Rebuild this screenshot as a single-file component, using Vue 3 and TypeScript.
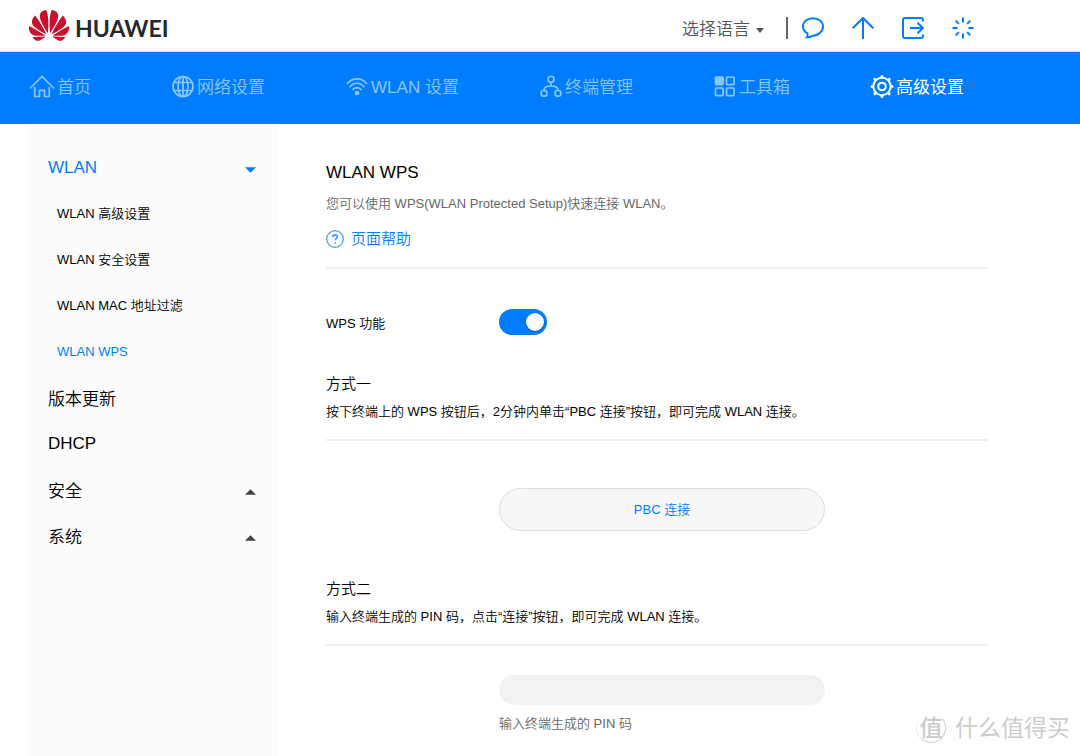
<script setup lang="ts">
import { ref } from 'vue'

type IconName = 'home' | 'globe' | 'wifi' | 'nodes' | 'tools' | 'gear'

interface NavItem {
  label: string
  icon: IconName
  active?: boolean
}

const navItems: NavItem[] = [
  { label: '首页', icon: 'home' },
  { label: '网络设置', icon: 'globe' },
  { label: 'WLAN 设置', icon: 'wifi' },
  { label: '终端管理', icon: 'nodes' },
  { label: '工具箱', icon: 'tools' },
  { label: '高级设置', icon: 'gear', active: true },
]

const wlanItems: string[] = ['WLAN 高级设置', 'WLAN 安全设置', 'WLAN MAC 地址过滤', 'WLAN WPS']
const currentPage = ref('WLAN WPS')
const plainItems: string[] = ['版本更新', 'DHCP']
const closedGroups: string[] = ['安全', '系统']

const wpsEnabled = ref(true)
const pin = ref('')
</script>

<template>
  <div class="page">
    <header class="topbar">
      <a class="brand" href="#" aria-label="HUAWEI">
        <svg class="brand-mark" viewBox="0 2.9 24 18.2" preserveAspectRatio="none" aria-hidden="true">
          <path d="M3.67 6.14S1.82 7.91 1.72 9.78v.35c.08 1.51 1.22 2.4 1.22 2.4 1.83 1.79 6.26 4.04 7.3 4.55 0 0 .06.03.1-.01l.02-.04v-.04C7.52 10.8 3.67 6.14 3.67 6.14zM9.65 18.6c-.02-.08-.1-.08-.1-.08l-7.38.26c.8 1.43 2.15 2.53 3.56 2.2.96-.25 3.16-1.78 3.88-2.3.06-.05.04-.09.04-.09zm.08-.78C6.49 15.63.21 12.28.21 12.28c-.15.46-.2.9-.21 1.3v.07c0 1.07.4 1.82.4 1.82.8 1.69 2.34 2.2 2.34 2.2.7.3 1.4.31 1.4.31.12.02 4.4 0 5.54 0 .05 0 .08-.05.08-.05v-.06c0-.03-.03-.05-.03-.05zM9.06 3.19a3.42 3.42 0 00-2.57 3.15v.41c.03.6.16 1.05.16 1.05.66 2.9 3.86 7.65 4.55 8.65.05.05.1.03.1.03a.1.1 0 00.06-.1c1.06-10.6-1.11-13.42-1.11-13.42-.32.02-1.19.23-1.19.23zm8.3 2.27s-.49-1.8-2.44-2.28c0 0-.57-.14-1.17-.22 0 0-2.18 2.81-1.12 13.43.01.07.06.08.06.08.07.03.1-.03.1-.03.72-1.03 3.9-5.76 4.55-8.64 0 0 .36-1.4.02-2.34zm-2.92 13.07s-.07 0-.09.05c0 0-.01.07.03.1.7.51 2.85 2 3.88 2.3 0 0 .16.05.43.06h.14c.69-.02 1.9-.37 3-2.26l-7.4-.25zm7.83-8.41c.14-2.06-1.94-3.97-1.94-3.98 0 0-3.85 4.66-6.67 10.8 0 0-.03.08.02.13l.04.01h.06c1.06-.53 5.46-2.77 7.28-4.54 0 0 1.15-.93 1.21-2.42zm1.52 2.14s-6.28 3.37-9.52 5.55c0 0-.05.04-.03.11 0 0 .03.06.07.06 1.16 0 5.56 0 5.67-.02 0 0 .57-.02 1.27-.29 0 0 1.56-.5 2.37-2.27 0 0 .73-1.45.17-3.14z" />
        </svg>
        <span class="brand-name">HUAWEI</span>
      </a>

      <div class="tools">
        <div class="language">
          <select class="language-select" aria-label="选择语言">
            <option>选择语言</option>
          </select>
          <svg class="language-caret" viewBox="0 0 8 5" aria-hidden="true"><path d="M0 0h8L4 5z" /></svg>
        </div>
        <span class="tools-divider"></span>
        <button class="tool" type="button" aria-label="消息">
          <svg viewBox="0 0 22 22" aria-hidden="true">
            <path d="M5.3 16.2C2.7 14.7 1 12.3 1 9.4 1 4.8 5.5 1.2 11 1.2s10 3.6 10 8.2-4.5 9.4-10.5 9.4c-1.600 1-3.600 1.600-5.700 1.500 1-1.200 1.300-2.700.5-4.100z" />
          </svg>
        </button>
        <button class="tool" type="button" aria-label="升级">
          <svg viewBox="0 0 22 22" aria-hidden="true"><path d="M11 22V1.5M.7 11.3L11 1l10.300 10.300" /></svg>
        </button>
        <button class="tool" type="button" aria-label="退出">
          <svg viewBox="0 0 22 22" aria-hidden="true">
            <path d="M21 4.500V3a2 2 0 0 0-2-2H3a2 2 0 0 0-2 2v16a2 2 0 0 0 2 2h16a2 2 0 0 0 2-2v-1.500M8 11h12.500M15.500 5.700l5.300 5.300-5.300 5.300" />
          </svg>
        </button>
        <button class="tool" type="button" aria-label="重启">
          <svg viewBox="0 0 22 22" aria-hidden="true">
            <path d="M11 .5v5M11 16.500v5M.5 11h5M16.500 11h5M3.600 3.600l3.300 3.300M15.100 15.100l3.300 3.300M18.400 3.600l-3.300 3.300M6.900 15.100l-3.300 3.300" />
          </svg>
        </button>
      </div>
    </header>

    <nav class="nav">
      <a v-for="item in navItems" :key="item.label" href="#" class="nav-link" :class="{ active: item.active }">
        <svg v-if="item.icon === 'home'" class="nav-icon wide" viewBox="0 0 26 24" aria-hidden="true">
          <path d="M1 13.500L13 1.500l12 12M5.700 12v9.500h4.800v-6.200h5v6.200h4.800V12" />
        </svg>
        <svg v-else-if="item.icon === 'globe'" class="nav-icon" viewBox="0 0 24 24" aria-hidden="true">
          <circle cx="12" cy="11.500" r="10" />
          <ellipse cx="12" cy="11.500" rx="5" ry="10" />
          <path d="M12 1.500v20M3 7.500h18M3 15.500h18" />
        </svg>
        <svg v-else-if="item.icon === 'wifi'" class="nav-icon" viewBox="0 0 24 24" aria-hidden="true">
          <path d="M2 9a12.200 12.200 0 0 1 20 0M4.600 12.200a8.900 8.900 0 0 1 14.800 0M7.600 15a5.200 5.200 0 0 1 8.800 0" />
          <circle class="solid" cx="12" cy="18" r="1.500" />
        </svg>
        <svg v-else-if="item.icon === 'nodes'" class="nav-icon" viewBox="0 0 24 24" aria-hidden="true">
          <rect x="9.200" y="1.500" width="5.600" height="5.600" rx="2" />
          <rect x="2.200" y="15.500" width="5.600" height="5.600" rx="2" />
          <rect x="16.200" y="15.500" width="5.600" height="5.600" rx="2" />
          <path d="M12 7.100v3.900M5 15.500c0-3.300 2-4.500 7-4.500s7 1.200 7 4.500" />
        </svg>
        <svg v-else-if="item.icon === 'tools'" class="nav-icon" viewBox="0 0 24 24" aria-hidden="true">
          <rect class="solid" x="2.500" y="2" width="7.600" height="7.600" rx="1" />
          <rect x="13.500" y="2" width="7.600" height="7.600" rx="1" />
          <rect x="2.500" y="13" width="7.600" height="7.600" rx="1" />
          <rect x="13.500" y="13" width="7.600" height="7.600" rx="1" />
        </svg>
        <svg v-else class="nav-icon" viewBox="0 0 24 24" aria-hidden="true">
          <circle class="bold" cx="12" cy="11.500" r="8.700" />
          <circle class="bold" cx="12" cy="11.500" r="3.800" />
          <path class="teeth" d="M12 1.500v.5M12 21v.5M2 11.500h.5M21.500 11.500h.5M4.900 4.400l.4.400M18.700 18.200l.4.400M19.100 4.400l-.4.400M5.300 18.200l-.4.400" />
        </svg>
        <span class="nav-label">{{ item.label }}</span>
      </a>
    </nav>

    <div class="body">
      <aside class="sidebar">
        <button class="group open" type="button" aria-expanded="true">
          <span>WLAN</span>
          <svg class="caret" viewBox="0 0 12 6" aria-hidden="true"><path d="M0 0h12L6 6z" /></svg>
        </button>
        <ul class="submenu">
          <li v-for="label in wlanItems" :key="label">
            <a
              href="#"
              class="sub-link"
              :class="{ current: label === currentPage }"
              @click.prevent="currentPage = label"
            >{{ label }}</a>
          </li>
        </ul>
        <ul class="plain">
          <li v-for="label in plainItems" :key="label"><a href="#" class="plain-link">{{ label }}</a></li>
        </ul>
        <button v-for="label in closedGroups" :key="label" class="group" type="button" aria-expanded="false">
          <span>{{ label }}</span>
          <svg class="caret" viewBox="0 0 12 6" aria-hidden="true"><path d="M0 6h12L6 0z" /></svg>
        </button>
      </aside>

      <main class="content">
        <section class="intro">
          <h1>WLAN WPS</h1>
          <p class="lead">您可以使用 WPS(WLAN Protected Setup)快速连接 WLAN。</p>
          <a class="help" href="#">
            <svg viewBox="0 0 18 18" aria-hidden="true">
              <circle cx="9" cy="9" r="8.300" />
              <path class="mark" d="M6.700 7.200c0-1.500 1-2.300 2.300-2.300s2.300.8 2.300 2c0 1.700-2.200 1.700-2.200 3.400M9.100 12v1.500" />
            </svg>
            <span>页面帮助</span>
          </a>
        </section>

        <div class="row switch-row">
          <label for="wps-switch">WPS 功能</label>
          <input id="wps-switch" v-model="wpsEnabled" class="switch" type="checkbox" role="switch" />
        </div>

        <section class="method">
          <h2>方式一</h2>
          <p>按下终端上的 WPS 按钮后，2分钟内单击“PBC 连接”按钮，即可完成 WLAN 连接。</p>
        </section>
        <div class="row button-row">
          <button class="pbc" type="button">PBC 连接</button>
        </div>

        <section class="method">
          <h2>方式二</h2>
          <p>输入终端生成的 PIN 码，点击“连接”按钮，即可完成 WLAN 连接。</p>
        </section>
        <div class="row pin-row">
          <div class="pin-field">
            <input id="pin-code" v-model="pin" class="pin" type="text" />
            <label class="hint" for="pin-code">输入终端生成的 PIN 码</label>
          </div>
        </div>
      </main>
    </div>

    <div class="watermark">
      <span class="watermark-badge">值</span>
      <span>什么值得买</span>
    </div>
  </div>
</template>

<style>
body {
  margin: 0;
  background: #fff;
}
</style>

<style scoped>
.page {
  position: relative;
  display: flex;
  flex-direction: column;
  min-height: 100vh;
  overflow: hidden;
  box-sizing: border-box;
  font-family: "Liberation Sans", Arial, "Noto Sans CJK SC", sans-serif;
  font-size: 13px;
  font-weight: 350;
  line-height: 20px;
  color: #000;
}

a {
  color: inherit;
  text-decoration: none;
}

button,
input,
select {
  margin: 0;
  padding: 0;
  border: 0;
  background: none;
  color: inherit;
  font: inherit;
}

button {
  cursor: pointer;
}

ul {
  margin: 0;
  padding: 0;
  list-style: none;
}

svg {
  display: block;
  flex: none;
}

.topbar {
  display: flex;
  align-items: center;
  justify-content: space-between;
  height: 51px;
  padding: 0 106px 0 29px;
  border-bottom: 1px solid #d9dde2;
}

.brand {
  display: flex;
  align-items: center;
  gap: 6px;
}

.brand-mark {
  width: 40px;
  height: 31px;
  fill: #c8102e;
}

.brand-name {
  padding-top: 4px;
  font-family: Lato, "Liberation Sans", sans-serif;
  font-size: 23px;
  font-weight: 700;
  line-height: 28px;
  color: #24292b;
}

.tools {
  display: flex;
  align-items: center;
  gap: 28px;
  padding-top: 5px;
}

.language {
  display: flex;
  align-items: center;
  padding-top: 4px;
  color: #555;
}

.language-select {
  width: 82px;
  appearance: none;
  font-size: 17px;
  line-height: 24px;
}

.language-caret {
  width: 8px;
  height: 5px;
  margin-left: -8px;
  fill: #555;
  pointer-events: none;
}

.tools-divider {
  width: 2px;
  height: 22px;
  margin: 0 -14px 0 -6px;
  background: #666;
}

.tool svg {
  width: 22px;
  height: 22px;
  fill: none;
  stroke: #007dff;
  stroke-width: 2;
}

.nav {
  display: flex;
  align-items: center;
  justify-content: space-between;
  height: 72px;
  padding: 0 116px 2px 29px;
  box-sizing: border-box;
  background: #007dff;
}

.nav-link {
  display: flex;
  align-items: center;
  gap: 2px;
  font-size: 17px;
  line-height: 24px;
  color: #8cc5ff;
}

.nav-link.active {
  color: #fff;
  font-weight: 400;
}

.nav-label {
  padding-top: 2px;
}

.nav-icon {
  width: 24px;
  height: 24px;
  fill: none;
  stroke: currentColor;
  stroke-width: 1.7;
}

.nav-icon.wide {
  width: 26px;
}

.nav-icon .solid {
  fill: currentColor;
}

.nav-icon .bold {
  stroke-width: 2;
}

.nav-icon .teeth {
  stroke-width: 3;
  stroke-linecap: round;
}

.body {
  display: flex;
  flex: 1;
  padding: 0 92px 0 28px;
}

.sidebar {
  flex: none;
  width: 250px;
  padding: 21px 22px 0 20px;
  box-sizing: border-box;
  background: #fcfcfc;
}

.group {
  display: flex;
  align-items: center;
  justify-content: space-between;
  width: 100%;
  height: 46px;
  font-size: 17px;
  text-align: left;
}

.group.open {
  color: #007dff;
}

.caret {
  width: 11px;
  height: 6px;
  fill: #444;
}

.open .caret {
  margin-top: 4px;
  fill: #007dff;
}

.sub-link {
  display: block;
  padding-left: 9px;
  line-height: 46px;
}

.sub-link.current {
  color: #007dff;
}

.plain {
  margin: 3px 0;
}

.plain-link {
  display: block;
  font-size: 17px;
  line-height: 44px;
}

.content {
  flex: 1;
  min-width: 0;
  padding: 37px 0 20px 48px;
}

h1,
h2,
p {
  margin: 0;
  font-weight: inherit;
}

.intro {
  padding-bottom: 18px;
  border-bottom: 2px solid #eee;
}

h1 {
  font-size: 17px;
  line-height: 24px;
}

.lead {
  margin-top: 9px;
  color: #666;
}

.help {
  display: flex;
  align-items: center;
  gap: 7px;
  width: fit-content;
  margin-top: 15px;
  font-size: 15px;
  color: #007dff;
}

.help svg {
  width: 18px;
  height: 18px;
  fill: none;
  stroke: #3d9bff;
  stroke-width: 1.2;
}

.help .mark {
  stroke-width: 1.6;
}

.row {
  display: grid;
  grid-template-columns: 173fr 326fr 163fr;
  align-items: center;
}

.switch-row {
  margin-top: 40px;
}

.switch-row label {
  padding-top: 4px;
}

.switch {
  display: flex;
  align-items: center;
  justify-content: flex-start;
  width: 48px;
  height: 26px;
  padding: 0 3px;
  border-radius: 13px;
  box-sizing: border-box;
  background: #ccc;
  appearance: none;
  cursor: pointer;
}

.switch::before {
  width: 18px;
  height: 18px;
  border-radius: 50%;
  background: #fafafa;
  box-shadow: 0 1px 2px rgba(0, 0, 0, 0.3);
  content: "";
}

.switch:checked {
  justify-content: flex-end;
  background: #007dff;
}

.method {
  margin-top: 38px;
  padding-bottom: 17px;
  border-bottom: 2px solid #eee;
}

h2 {
  font-size: 15px;
  line-height: 22px;
}

.method p {
  margin-top: 7px;
}

.button-row {
  margin-top: 47px;
}

.pbc {
  grid-column: 2;
  height: 43px;
  border: 1px solid #ddd;
  border-radius: 22px;
  background: #f7f7f7;
  color: #007dff;
}

.button-row + .method {
  margin-top: 47px;
}

.pin-row {
  margin-top: 29px;
}

.pin-field {
  display: flex;
  flex-direction: column;
  grid-column: 2;
  gap: 9px;
}

.pin {
  height: 30px;
  padding: 0 15px;
  border-radius: 15px;
  background: #f2f2f2;
}

.hint {
  color: #666;
}

.watermark {
  position: absolute;
  right: 10px;
  bottom: 12px;
  display: flex;
  align-items: center;
  gap: 9px;
  font-size: 23px;
  font-weight: 400;
  line-height: 32px;
  color: #ccc;
  pointer-events: none;
}

.watermark-badge {
  width: 28px;
  height: 28px;
  border: 1px solid #ccc;
  border-top-color: transparent;
  border-left-color: #eee;
  border-radius: 50%;
  font-weight: 500;
  line-height: 28px;
  text-align: center;
}
</style>
